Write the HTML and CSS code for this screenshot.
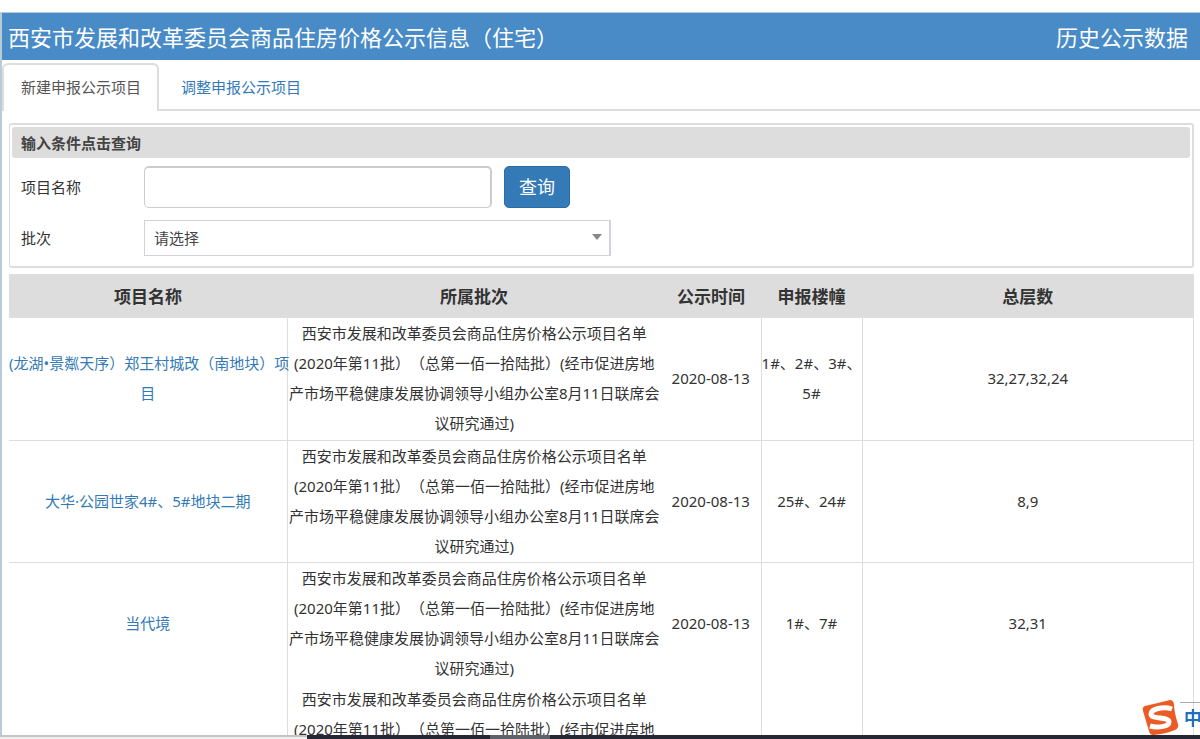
FILE: index.html
```html
<!DOCTYPE html>
<html lang="zh-CN">
<head>
<meta charset="utf-8">
<meta name="viewport" content="width=device-width, initial-scale=1">
<title>西安市发展和改革委员会商品住房价格公示信息（住宅）</title>
<link rel="stylesheet" href="styles.css">
</head>
<body>
<div class="page">
  <header class="banner">
    <h1 class="banner-title">西安市发展和改革委员会商品住房价格公示信息（住宅）</h1>
    <a class="banner-link" href="#history">历史公示数据</a>
  </header>
  <nav class="tabs">
    <a class="tab tab-active" href="#new">新建申报公示项目</a>
    <a class="tab" href="#adjust">调整申报公示项目</a>
  </nav>
  <main class="content">
    <form class="search">
      <h2 class="search-title">输入条件点击查询</h2>
      <div class="field">
        <label class="field-label" for="name">项目名称</label>
        <input class="field-input" id="name" type="text">
        <button class="field-button" type="button">查询</button>
      </div>
      <div class="field">
        <label class="field-label" for="batch">批次</label>
        <div class="select-wrap">
          <select class="field-select" id="batch"><option>请选择</option></select>
        </div>
      </div>
    </form>
    <table class="list">
      <colgroup><col class="col-name"><col class="col-batch"><col class="col-date"><col class="col-block"><col></colgroup>
      <thead>
        <tr><th>项目名称</th><th>所属批次</th><th>公示时间</th><th>申报楼幢</th><th>总层数</th></tr>
      </thead>
      <tbody>
        <tr>
          <td><a href="#p1">(龙湖•景粼天序）郑王村城改（南地块）项<br>目</a></td>
          <td>西安市发展和改革委员会商品住房价格公示项目名单<br>(2020年第11批）（总第一佰一拾陆批）(经市促进房地<br>产市场平稳健康发展协调领导小组办公室8月11日联席会<br>议研究通过)</td>
          <td>2020-08-13</td>
          <td>1#、2#、3#、<br>5#</td>
          <td>32,27,32,24</td>
        </tr>
        <tr>
          <td><a href="#p2">大华·公园世家4#、5#地块二期</a></td>
          <td>西安市发展和改革委员会商品住房价格公示项目名单<br>(2020年第11批）（总第一佰一拾陆批）(经市促进房地<br>产市场平稳健康发展协调领导小组办公室8月11日联席会<br>议研究通过)</td>
          <td>2020-08-13</td>
          <td>25#、24#</td>
          <td>8,9</td>
        </tr>
        <tr>
          <td><a href="#p3">当代境</a></td>
          <td>西安市发展和改革委员会商品住房价格公示项目名单<br>(2020年第11批）（总第一佰一拾陆批）(经市促进房地<br>产市场平稳健康发展协调领导小组办公室8月11日联席会<br>议研究通过)</td>
          <td>2020-08-13</td>
          <td>1#、7#</td>
          <td>32,31</td>
        </tr>
        <tr class="row-open">
          <td></td>
          <td>西安市发展和改革委员会商品住房价格公示项目名单<br>(2020年第11批）（总第一佰一拾陆批）(经市促进房地</td>
          <td></td>
          <td></td>
          <td></td>
        </tr>
      </tbody>
    </table>
  </main>
</div>
<div class="taskbar"><span class="taskbar-light"></span><span class="taskbar-dark"></span><span class="taskbar-app"></span></div>
<div class="ime">
  <svg class="ime-logo" viewBox="0 0 38 36" aria-hidden="true">
    <path d="M3 6 Q16 3 28 0 Q31 0 32 4 Q32 12 36 24 Q37 28 33 30 Q24 34 11 35 Q8 35 7 31 L1 11 Q0 7 3 6Z" fill="#ec5b24"/>
    <path d="M30 9 C21 6 9 9 9 14 C9 20 27 16 27 22 C27 27 15 28 8 26" fill="none" stroke="#fff" stroke-width="5"/>
  </svg>
  <span class="ime-bar">中</span>
</div>
</body>
</html>
```
FILE: styles.css
```css
* { box-sizing: border-box; }

body {
  margin: 0;
  height: 100vh;
  overflow: hidden;
  background: #fff;
  color: #333;
  font: 15px/30px "Noto Sans", "Noto Sans CJK SC", sans-serif;
  text-spacing-trim: space-all;
}

a { color: #337ab7; text-decoration: none; }

.page {
  margin-top: 12px;
  border-top: 1px solid #b8cbdc;
  border-left: 2px solid #b9cad9;
}

.banner {
  display: flex;
  justify-content: space-between;
  align-items: center;
  height: 47px;
  padding: 0 12px 0 6px;
  background: #488bc6;
  color: #fff;
}

.banner-title { margin: 0; font-size: 22px; font-weight: 400; }
.banner-link { color: #fff; font-size: 22px; }

.tabs {
  display: flex;
  height: 51px;
  padding-top: 3px;
  border-bottom: 2px solid #ddd;
}

.tab {
  height: 48px;
  padding: 9px 20px 0 22px;
}

.tab-active {
  padding: 7px 16px 0 17px;
  border: 2px solid #ddd;
  border-bottom: 0;
  border-radius: 6px 6px 0 0;
  background: #fff;
  color: #555;
}

.content { padding: 12px 6px 0 7px; }

.search {
  height: 145px;
  padding: 2px 2px 0 1px;
  border: 2px solid #ddd;
  border-left-width: 1px;
  border-radius: 3px;
}

.search-title {
  margin: 0 0 8px 1px;
  padding: 1px 9px 0;
  border-radius: 3px;
  background: #ddd;
  color: #444;
  font-size: 15px;
  font-weight: 700;
}

.field {
  display: flex;
  align-items: center;
  margin-bottom: 12px;
  padding-left: 10px;
}

.field-label { width: 123px; }

.field-input {
  width: 348px;
  height: 42px;
  padding: 0 12px;
  border: 2px solid #ccc;
  border-width: 2px 2px 1px 1px;
  border-radius: 5px;
  font: inherit;
}

.field-button {
  width: 66px;
  height: 42px;
  margin-left: 12px;
  padding: 0;
  border: 1px solid #2e6da4;
  border-radius: 5px;
  background: #337ab7;
  color: #fff;
  font: inherit;
  font-size: 18px;
}

.select-wrap { position: relative; width: 467px; }

.select-wrap::after {
  content: "";
  position: absolute;
  top: 14px;
  right: 9px;
  border: 5px solid transparent;
  border-top: 6px solid #888;
  border-bottom: 0;
  pointer-events: none;
}

.field-select {
  display: block;
  appearance: none;
  width: 100%;
  height: 36px;
  padding: 0 9px;
  border: 1px solid #d2d2da;
  border-right-width: 2px;
  border-radius: 0;
  background: #fff;
  color: #444;
  font: inherit;
}

.list {
  width: 100%;
  margin-top: 6px;
  border-collapse: collapse;
  table-layout: fixed;
  text-align: center;
}

.col-name { width: 278px; }
.col-batch { width: 374px; }
.col-date { width: 100px; }
.col-block { width: 101px; }

th {
  height: 44px;
  padding: 2px 0 0;
  background: #ddd;
  font-size: 17px;
}

td {
  padding: 0 0 1px;
  border: 1px solid #ddd;
  white-space: nowrap;
}

tbody tr:first-child td { padding-bottom: 2px; border-top: 0; }
td:first-child { border-left: 0; }
td:nth-child(2) { border-right: 0; }
td:nth-child(3) { border-left: 0; }
tr:nth-child(3) td { border-bottom: 0; }
.row-open td { border-top: 0; }

.taskbar {
  position: fixed;
  right: 0;
  bottom: 0;
  left: 0;
  display: flex;
  height: 4px;
  background: #252735;
}

.taskbar-light { width: 307px; border-top: 2px solid #c4c4c4; background: #eee; }
.taskbar-dark { width: 183px; }
.taskbar-app { width: 60px; background: #5f616b; }

.ime {
  position: fixed;
  right: 0;
  bottom: 2px;
  display: flex;
  width: 58px;
  height: 37px;
}

.ime-logo { flex: none; width: 38px; height: 36px; }

.ime-bar {
  flex: none;
  height: 33px;
  margin-top: 2px;
  padding-left: 4px;
  border-top: 1px solid #aaa;
  color: #1f6fc0;
  font-size: 18px;
  font-weight: 700;
}
```
